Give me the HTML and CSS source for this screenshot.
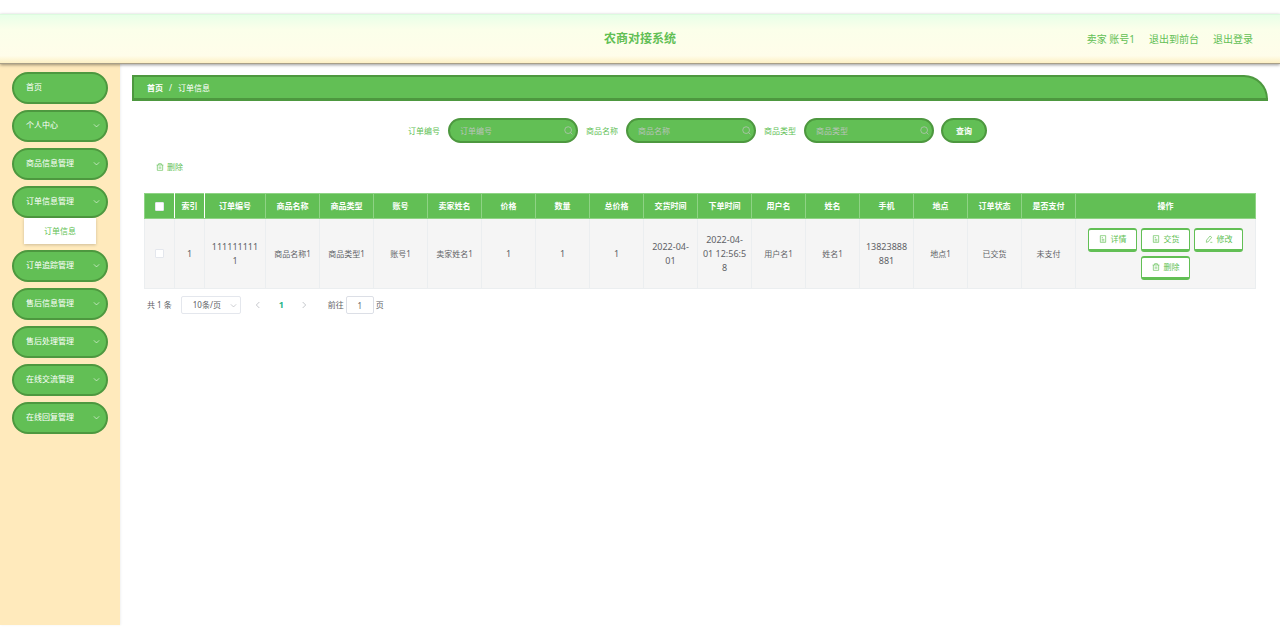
FILE: index.html
```html
<!DOCTYPE html>
<html lang="zh-CN">
<head>
    <meta charset="UTF-8">
    <meta name="viewport" content="width=device-width, initial-scale=1.0">
    <title>农商对接系统</title>
    <link rel="stylesheet" href="styles.css">
</head>
<body>
    <!-- shared icons -->
    <svg class="sprite" aria-hidden="true">
        <symbol id="icon-down" viewBox="0 0 12 12"><path d="M1.5 4 6 8.5 10.5 4"/></symbol>
        <symbol id="icon-left" viewBox="0 0 12 12"><path d="M8 1.5 3.5 6 8 10.5"/></symbol>
        <symbol id="icon-right" viewBox="0 0 12 12"><path d="M4 1.5 8.5 6 4 10.5"/></symbol>
        <symbol id="icon-search" viewBox="0 0 12 12"><circle cx="5.5" cy="5.5" r="4.5"/><path d="m8.8 8.8 2.4 2.4"/></symbol>
        <symbol id="icon-doc" viewBox="0 0 12 12"><path d="M2 1h8v10H2zM4 4h2M4 6.5h4M4 8.8h4"/></symbol>
        <symbol id="icon-edit" viewBox="0 0 12 12"><path d="M7.5 1.5 10 3.5 5 10l-3 1 .3-3.2zM8 11h3"/></symbol>
        <symbol id="icon-delete" viewBox="0 0 12 12"><path d="M1 3h10M4 3V1h4v2M2 3v8h8V3M4.8 5.2v3.6M7.2 5.2v3.6"/></symbol>
    </svg>

    <header class="header">
        <h1>农商对接系统</h1>
        <nav class="header-links">
            <span>卖家 账号1</span>
            <a href="#">退出到前台</a>
            <a href="#">退出登录</a>
        </nav>
    </header>

    <div class="container">
        <aside class="sidebar">
            <button type="button" class="menu-item">首页</button>
            <button type="button" class="menu-item">个人中心<svg><use href="#icon-down"/></svg></button>
            <button type="button" class="menu-item">商品信息管理<svg><use href="#icon-down"/></svg></button>
            <div class="menu-group">
                <button type="button" class="menu-item">订单信息管理<svg><use href="#icon-down"/></svg></button>
                <a href="#" class="submenu-item">订单信息</a>
            </div>
            <button type="button" class="menu-item">订单追踪管理<svg><use href="#icon-down"/></svg></button>
            <button type="button" class="menu-item">售后信息管理<svg><use href="#icon-down"/></svg></button>
            <button type="button" class="menu-item">售后处理管理<svg><use href="#icon-down"/></svg></button>
            <button type="button" class="menu-item">在线交流管理<svg><use href="#icon-down"/></svg></button>
            <button type="button" class="menu-item">在线回复管理<svg><use href="#icon-down"/></svg></button>
        </aside>

        <main class="main">
            <nav class="breadcrumb">
                <a href="#">首页</a>
                <span>/</span>
                <span>订单信息</span>
            </nav>

            <div class="content">
                <form class="search-form">
                    <label for="orderNo">订单编号</label>
                    <div class="search-box">
                        <input type="text" id="orderNo" placeholder="订单编号">
                        <svg><use href="#icon-search"/></svg>
                    </div>
                    <label for="goodsName">商品名称</label>
                    <div class="search-box">
                        <input type="text" id="goodsName" placeholder="商品名称">
                        <svg><use href="#icon-search"/></svg>
                    </div>
                    <label for="goodsType">商品类型</label>
                    <div class="search-box">
                        <input type="text" id="goodsType" placeholder="商品类型">
                        <svg><use href="#icon-search"/></svg>
                    </div>
                    <button type="submit" class="search-btn">查询</button>
                </form>

                <div class="toolbar">
                    <button type="button" class="text-btn"><svg><use href="#icon-delete"/></svg>删除</button>
                </div>

                <table class="order-table">
                    <colgroup>
                        <col class="col-small" span="2">
                        <col class="col-order">
                        <col class="col-normal" span="15">
                        <col>
                    </colgroup>
                    <thead>
                        <tr>
                            <th><input type="checkbox" aria-label="全选"></th>
                            <th>索引</th>
                            <th>订单编号</th>
                            <th>商品名称</th>
                            <th>商品类型</th>
                            <th>账号</th>
                            <th>卖家姓名</th>
                            <th>价格</th>
                            <th>数量</th>
                            <th>总价格</th>
                            <th>交货时间</th>
                            <th>下单时间</th>
                            <th>用户名</th>
                            <th>姓名</th>
                            <th>手机</th>
                            <th>地点</th>
                            <th>订单状态</th>
                            <th>是否支付</th>
                            <th>操作</th>
                        </tr>
                    </thead>
                    <tbody>
                        <tr>
                            <td><input type="checkbox" aria-label="选择"></td>
                            <td class="num">1</td>
                            <td class="num order-no">1111111111</td>
                            <td>商品名称1</td>
                            <td>商品类型1</td>
                            <td>账号1</td>
                            <td>卖家姓名1</td>
                            <td class="num">1</td>
                            <td class="num">1</td>
                            <td class="num">1</td>
                            <td class="num">2022-04-<br>01</td>
                            <td class="num">2022-04-<br>01 12:56:58</td>
                            <td>用户名1</td>
                            <td>姓名1</td>
                            <td class="num">13823888881</td>
                            <td>地点1</td>
                            <td>已交货</td>
                            <td>未支付</td>
                            <td>
                                <div class="actions">
                                    <button type="button"><svg><use href="#icon-doc"/></svg>详情</button>
                                    <button type="button"><svg><use href="#icon-doc"/></svg>交货</button>
                                    <button type="button"><svg><use href="#icon-edit"/></svg>修改</button>
                                    <button type="button"><svg><use href="#icon-delete"/></svg>删除</button>
                                </div>
                            </td>
                        </tr>
                    </tbody>
                </table>

                <div class="pagination">
                    <span>共 1 条</span>
                    <div class="page-size">
                        <select aria-label="每页条数">
                            <option>10条/页</option>
                            <option>20条/页</option>
                            <option>50条/页</option>
                        </select>
                        <svg><use href="#icon-down"/></svg>
                    </div>
                    <div class="pager">
                        <button type="button" aria-label="上一页"><svg><use href="#icon-left"/></svg></button>
                        <button type="button" class="active">1</button>
                        <button type="button" aria-label="下一页"><svg><use href="#icon-right"/></svg></button>
                    </div>
                    <label class="jump">前往<input type="text" value="1">页</label>
                </div>
            </div>
        </main>
    </div>
</body>
</html>
```
FILE: styles.css
```css
* {
    box-sizing: border-box;
}

body {
    margin: 0;
    padding: 14px 0 15px;
    min-height: 100vh;
    display: flex;
    flex-direction: column;
    background-color: #fff;
    color: #606266;
    font-family: "Noto Sans", "Noto Sans CJK SC", sans-serif;
    font-size: 8px;
    line-height: 14px;
}

a {
    color: inherit;
    text-decoration: none;
}

button,
input,
select {
    margin: 0;
    padding: 0;
    font: inherit;
    color: inherit;
}

button {
    cursor: pointer;
}

svg {
    flex: none;
    width: 8px;
    height: 8px;
    fill: none;
    stroke: currentColor;
}

.sprite {
    display: none;
}

/* header */
.header {
    position: relative;
    display: flex;
    align-items: center;
    justify-content: center;
    height: 50px;
    border-top: 1px solid #dcfbdf;
    border-bottom: 1px solid #a89f88;
    background: linear-gradient(#e8ffe8, #fbffea 30%, #fffdea 85%, #fdf0c4);
    box-shadow: 0 1px 3px rgba(0, 0, 0, 0.4);
    color: #62bf55;
}

.header h1 {
    margin: 0;
    font-size: 12px;
    line-height: 20px;
}

.header-links {
    position: absolute;
    right: 27px;
    display: flex;
    gap: 14px;
    font-size: 10px;
}

.container {
    flex: 1;
    display: flex;
}

/* sidebar */
.sidebar {
    width: 120px;
    padding: 8px 12px;
    display: flex;
    flex-direction: column;
    gap: 6px;
    background-color: #ffeabc;
    box-shadow: 1px 0 2px rgba(0, 0, 0, 0.06);
}

.menu-item {
    display: flex;
    align-items: center;
    justify-content: space-between;
    width: 100%;
    height: 32px;
    padding: 0 6px 2px 12px;
    border: 2px solid #4d983f;
    border-radius: 16px;
    background-color: #62bf55;
    color: #fff;
}

.menu-item svg {
    width: 7px;
    height: 7px;
}

.submenu-item {
    display: block;
    margin: 0 12px;
    background-color: #fff;
    box-shadow: 0 1px 3px rgba(0, 0, 0, 0.2);
    color: #62bf55;
    line-height: 26px;
    text-align: center;
}

/* main */
.main {
    flex: 1;
    min-width: 0;
    padding: 11px 12px;
}

.breadcrumb {
    display: flex;
    align-items: center;
    gap: 6px;
    height: 26px;
    padding: 0 13px;
    border: 2px solid #4d983f;
    border-bottom-width: 3px;
    border-top-right-radius: 24px;
    background-color: #62bf55;
    color: #fff;
}

.breadcrumb a {
    font-weight: bold;
}

.content {
    padding: 17px 12px 0;
}

.search-form {
    display: flex;
    align-items: center;
    justify-content: center;
    gap: 7px;
    padding-right: 6px;
}

.search-form label {
    width: 34px;
    color: #62bf55;
    text-align: center;
}

.search-box {
    position: relative;
    width: 130px;
}

.search-box input {
    display: block;
    width: 100%;
    height: 25px;
    padding: 0 20px 0 10px;
    border: 2px solid #4d983f;
    border-radius: 13px;
    background-color: #62bf55;
    color: #fff;
}

.search-box input::placeholder {
    color: #b9c4b9;
}

.search-box svg {
    position: absolute;
    top: 8px;
    right: 5px;
    width: 9px;
    height: 9px;
    color: #b9c4b9;
}

.search-btn {
    width: 46px;
    height: 25px;
    border: 2px solid #4d983f;
    border-radius: 13px;
    background-color: #62bf55;
    color: #fff;
    font-weight: bold;
}

.toolbar {
    padding: 17px 12px 19px;
}

.text-btn {
    display: flex;
    align-items: center;
    gap: 3px;
    border: 0;
    background: none;
    color: #62bf55;
}

/* table */
.order-table {
    width: 100%;
    table-layout: fixed;
    border-collapse: collapse;
    text-align: center;
}

.col-small {
    width: 30px;
}

.col-order {
    width: 61px;
}

.col-normal {
    width: 54px;
}

.order-table th,
.order-table td {
    padding: 0 4px;
    border: 1px solid #ebeef0;
    word-break: break-all;
}

.order-table th {
    height: 25px;
    border-color: #8fd385;
    background-color: #62bf55;
    color: #fff;
}

.order-table th:nth-child(-n+2) {
    border-right-color: #fff;
}

.order-table td {
    height: 70px;
    background-color: #f5f5f5;
}

.order-table .num {
    font-size: 9px;
}

.order-table .order-no {
    padding: 0 6px;
}

.order-table input {
    appearance: none;
    display: block;
    width: 9px;
    height: 9px;
    margin: 0 auto;
    border: 1px solid #e4e7ed;
    border-radius: 1px;
    background-color: #fff;
}

.actions {
    display: flex;
    flex-wrap: wrap;
    justify-content: center;
    gap: 4px;
}

.actions button {
    display: flex;
    align-items: center;
    justify-content: center;
    gap: 4px;
    width: 49px;
    height: 24px;
    border: 1px solid #62bf55;
    border-width: 2px 1px 3px;
    border-radius: 3px;
    background-color: #fff;
    color: #62bf55;
}

/* pagination */
.pagination {
    display: flex;
    align-items: center;
    padding: 7px 3px;
}

.page-size {
    position: relative;
    margin-left: 9px;
}

.page-size select {
    appearance: none;
    display: block;
    width: 60px;
    height: 18px;
    padding: 0 11px;
    border: 1px solid #e4e7ed;
    border-radius: 2px;
    background-color: #fff;
}

.page-size svg {
    position: absolute;
    top: 6px;
    right: 4px;
    width: 7px;
    height: 7px;
    color: #a8abb2;
    pointer-events: none;
}

.pager {
    display: flex;
    margin: 0 12px 0 6px;
}

.pager button {
    display: flex;
    align-items: center;
    justify-content: center;
    width: 23px;
    height: 18px;
    border: 0;
    background: none;
    color: #a8abb2;
}

.pager .active {
    color: #1fb588;
    font-size: 9px;
    font-weight: bold;
}

.jump {
    display: flex;
    align-items: center;
    gap: 2px;
}

.jump input {
    width: 28px;
    height: 18px;
    border: 1px solid #dcdfe6;
    border-radius: 2px;
    text-align: center;
}
```
